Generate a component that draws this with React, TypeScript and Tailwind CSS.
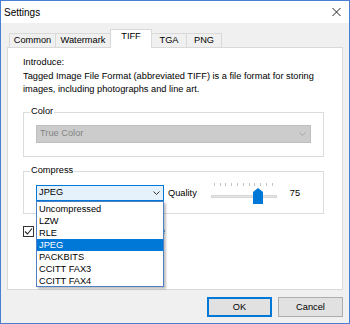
import React from 'react'

const TABS = [
    { name: "Common", w: "w-[47px]" },
    { name: "Watermark", w: "w-[56px]" },
    { name: "TIFF", w: "w-[42px]" },
    { name: "TGA", w: "w-[36px]" },
    { name: "PNG", w: "w-[36px]" },
];

const OPTIONS = ["Uncompressed", "LZW", "RLE", "JPEG", "PACKBITS", "CCITT FAX3", "CCITT FAX4"];

const Chevron = ({ color }: { color: string }) => (
    <svg width="7" height="4" viewBox="0 0 7 4" className="shrink-0">
        <polyline points="0.5,0.5 3.5,3.5 6.5,0.5" fill="none" stroke={color} strokeWidth="1" />
    </svg>
);

const GroupBox = ({ label, className, children }: any) => (
    <div className={`border border-[#dcdcdc] w-[301px] ${className}`}>
        <span className="block w-fit -mt-[8px] ml-[6px] px-[1px] bg-white leading-[12px]">{label}</span>
        {children}
    </div>
);

export default function App() {
    return (
        <div className="w-[350px] h-[324px] flex flex-col border border-[#4a7fd4] bg-[#f0f0f0] text-black text-[9.25px] font-['Liberation_Sans',Arial,sans-serif]">
            {/* title bar */}
            <div className="h-[22px] bg-white flex items-center justify-between pl-[3px] pr-[8px]">
                <span className="text-[10px]">Settings</span>
                <svg width="9" height="8" viewBox="0 0 9 8">
                    <path d="M0.5 0 L8.5 8 M8.5 0 L0.5 8" stroke="#222" strokeWidth="1" />
                </svg>
            </div>

            {/* tabs */}
            <div className="flex items-end pt-[6px] pl-[8px] h-[24px]">
                {TABS.map((tab, i) =>
                    tab.name === "TIFF" ? (
                        <div key={tab.name} className={`${tab.w} h-[19px] -ml-px -mb-px relative z-10 bg-white border-t border-x border-[#d9d9d9] flex justify-center leading-[13px]`}>
                            {tab.name}
                        </div>
                    ) : (
                        <div key={tab.name} className={`${tab.w} h-[14px] ${i > 0 ? '-ml-px' : ''} border-t border-x border-[#d9d9d9] bg-[#f0f0f0] flex justify-center leading-[13px]`}>
                            {tab.name}
                        </div>
                    )
                )}
            </div>

            {/* tab panel */}
            <div className="ml-[6px] w-[336px] h-[243px] border border-[#d9d9d9] bg-white pl-[15px] pt-[8px]">
                <p className="leading-[13px]">Introduce:</p>
                <p className="leading-[13px] mt-[1px] w-[305px]">
                    Tagged Image File Format (abbreviated TIFF) is a file format for storing images, including photographs and line art.
                </p>

                <GroupBox label="Color" className="mt-[16px] pb-[13px]">
                    <div className="mt-[8px] ml-[12px] w-[275px] h-[18px] border border-[#bfbfbf] bg-[#cccccc] flex items-center justify-between pl-[3px] pr-[4px] text-[#838383]">
                        <span>True Color</span>
                        <Chevron color="#a8a8a8" />
                    </div>
                </GroupBox>

                <GroupBox label="Compress" className="mt-[14px] pb-[12px]">
                    <div className="mt-[9px] ml-[12px] flex items-center">
                        <div className="relative w-[128px] h-[16px]">
                            <div className="h-full border border-[#0078d7] bg-[#e5f1fb] flex items-center justify-between pl-[2px] pr-[3px]">
                                <span>JPEG</span>
                                <Chevron color="#333" />
                            </div>
                            {/* open dropdown list */}
                            <div className="absolute left-0 top-full z-20 w-[128px] h-[86px] border border-[#4f7fc4] bg-white pt-[1px] shadow-[2px_2px_2px_rgba(0,0,0,0.25)]">
                                {OPTIONS.map((opt) => (
                                    <div key={opt} className={`h-[12px] leading-[12px] pl-[2px] ${opt === "JPEG" ? 'bg-[#0078d7] text-white' : ''}`}>
                                        {opt}
                                    </div>
                                ))}
                            </div>
                        </div>
                        <span className="ml-[4px] leading-[12px]">Quality</span>
                        <div className="relative ml-[11px] w-[72px] h-[16px]">
                            <div className="absolute left-[6px] top-[-2px] w-[59px] flex justify-between">
                                {Array.from({ length: 11 }).map((_, i) => (
                                    <div key={i} className="w-px h-[3px] bg-[#c4c4c4]" />
                                ))}
                            </div>
                            <div className="absolute left-[3px] top-[10px] w-[66px] h-[3px] bg-[#e7e7e7] border border-[#d6d6d6]" />
                            <svg className="absolute left-[45px] top-[3px]" width="10" height="16" viewBox="0 0 10 16">
                                <polygon points="5,0 10,4 10,16 0,16 0,4" fill="#0078d7" />
                            </svg>
                        </div>
                        <span className="ml-[10px] leading-[12px]">75</span>
                    </div>
                </GroupBox>

                <div className="mt-[11px] flex items-center gap-[3px]">
                    <div className="w-[11px] h-[11px] border border-[#333] bg-white flex items-center justify-center">
                        <svg width="9" height="9" viewBox="0 0 9 9">
                            <polyline points="1,4.5 3.5,7 8,1.5" fill="none" stroke="#222" strokeWidth="1.1" />
                        </svg>
                    </div>
                    <span className="leading-[12px]">Apply compression to every file</span>
                </div>
            </div>

            {/* buttons */}
            <div className="flex justify-end gap-[6px] pr-[6px] mt-[7px]">
                <button className="w-[65px] h-[20px] border border-[#0078d7] bg-[#e1e1e1] shadow-[inset_0_0_0_1px_#0078d7] leading-[12px]">OK</button>
                <button className="w-[65px] h-[20px] border border-[#adadad] bg-[#e1e1e1] leading-[12px]">Cancel</button>
            </div>
        </div>
    )
}
